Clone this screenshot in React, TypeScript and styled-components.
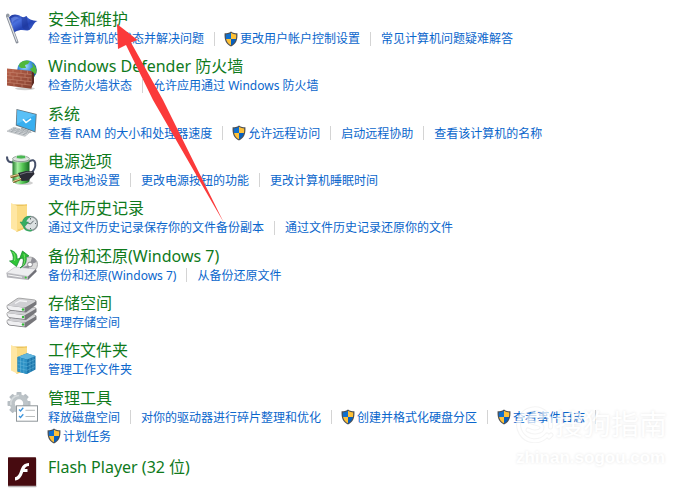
import React from "react";
import styled, { createGlobalStyle } from "styled-components";

const GlobalStyle = createGlobalStyle`
  * { box-sizing: border-box; }
  body {
    margin: 0;
    background: #fff;
    font-family: "Noto Sans", "Noto Sans CJK SC", sans-serif;
  }
`;

const Page = styled.main`
  position: relative;
  min-height: 100vh;
  overflow: hidden;
`;

const CategoryList = styled.ul`
  display: flex;
  flex-direction: column;
  justify-content: space-between;
  min-height: 100vh;
  margin: 0;
  padding: 9px 32px 3px 6px;
  list-style: none;
`;

const CategoryRow = styled.li<{ $bare?: boolean }>`
  display: flex;
  align-items: flex-start;
  gap: 10px;
  margin-top: ${(p) => (p.$bare ? 3 : 0)}px;
  > svg {
    flex: none;
    margin-top: ${(p) => (p.$bare ? 0 : 3)}px;
  }
`;

const CategoryBody = styled.div`
  flex: 1;
  min-width: 0;
`;

const CategoryTitle = styled.h2`
  margin: 0;
  font-size: 16px;
  line-height: 20px;
  font-weight: 400;
  a {
    color: #0f7a1c;
    text-decoration: none;
  }
`;

const TaskList = styled.ul`
  display: flex;
  flex-wrap: wrap;
  margin: 0;
  padding: 0;
  list-style: none;
`;

const TaskItem = styled.li`
  display: flex;
  align-items: center;
  height: 19px;
  &:not(:last-child)::after {
    content: "";
    width: 1px;
    height: 14px;
    margin: 0 10px;
    background: #d4d4d4;
  }
`;

const TaskLink = styled.a<{ $admin?: boolean }>`
  display: flex;
  align-items: center;
  gap: 2px;
  margin-left: ${(p) => (p.$admin ? -1 : 0)}px;
  color: #0a66cc;
  font-size: 12px;
  line-height: 19px;
  text-decoration: none;
  white-space: pre;
`;

const Arrow = styled.svg`
  position: absolute;
  left: 112px;
  top: 20px;
  pointer-events: none;
`;

const Watermark = styled.div`
  position: absolute;
  right: 24px;
  bottom: 22px;
  display: flex;
  flex-direction: column;
  gap: 2px;
  color: #fff;
  text-shadow: 0 0 3px rgba(0, 0, 0, 0.14);
  opacity: 0.7;
  pointer-events: none;
`;

const WatermarkBrand = styled.div`
  display: flex;
  align-items: center;
  gap: 1px;
  font-size: 28px;
  line-height: 40px;
`;

const WatermarkSite = styled.div`
  font-family: "Liberation Sans", sans-serif;
  font-size: 17px;
  font-weight: 700;
  line-height: 24px;
`;

const Shield = () => (
  <svg width="14" height="16" viewBox="0 0 14 16" aria-hidden="true">
    <path d="M7 .4 C5 1.9 2.7 2.3 .6 2.3 C.2 8.8 1.8 13.1 7 15.6 C12.2 13.1 13.8 8.8 13.4 2.3 C11.3 2.3 9 1.9 7 .4Z" fill="#4d5054" />
    <path d="M7 1.8 C5.3 2.9 3.5 3.3 1.8 3.4 C1.7 5.2 1.8 6.8 2.1 8 H7Z" fill="#0f6fce" />
    <path d="M7 1.8 C8.7 2.9 10.5 3.3 12.2 3.4 C12.3 5.2 12.2 6.8 11.9 8 H7Z" fill="#ffc136" />
    <path d="M2.1 8 H7 V14.3 C4.3 13 2.7 10.9 2.1 8Z" fill="#ffc136" />
    <path d="M11.9 8 H7 V14.3 C9.7 13 11.3 10.9 11.9 8Z" fill="#075fbd" />
  </svg>
);

const Icon = ({ children }: { children: React.ReactNode }) => (
  <svg width="32" height="32" viewBox="0 0 32 32" aria-hidden="true">{children}</svg>
);

const FlagIcon = () => (
  <Icon>
    <defs>
      <linearGradient id="flag" x1="0" y1="0" x2="1" y2="1">
        <stop offset="0" stopColor="#172d91" />
        <stop offset=".35" stopColor="#4a70de" />
        <stop offset=".6" stopColor="#2443b3" />
        <stop offset="1" stopColor="#4b71dc" />
      </linearGradient>
    </defs>
    <path d="M1.4 4 L11 30" stroke="#888e98" strokeWidth="2.8" strokeLinecap="round" />
    <path d="M1.5 4 L11 29.6" stroke="#e1e4e8" strokeWidth="1.1" />
    <circle cx="1.8" cy="3.2" r="1.7" fill="#9299a2" />
    <path d="M3 5.2 C7 1.5 11 2.2 15 4.5 C17.5 6 19.5 4.5 20.5 4 C22 7 26 8.5 31.5 9 C27 11 27 15 24 17.5 C20 20.5 17 15.5 8.5 20.3Z" fill="url(#flag)" />
    <path d="M15 4.5 C16.5 8 15 12 17 16.4 C20 18 22 18.5 24 17.2 C21 13 22 8 20.5 4 C19 5 17 6 15 4.5Z" fill="#1c3396" opacity=".55" />
    <path d="M5 6.5 C8 4 11 4.3 13.4 6.3 C11 7 8 8 6.2 11Z" fill="#7b9bf0" opacity=".55" />
  </Icon>
);

const FirewallIcon = () => (
  <Icon>
    <defs>
      <radialGradient id="globe" cx=".4" cy=".3" r=".75">
        <stop offset="0" stopColor="#a6e2ff" />
        <stop offset=".5" stopColor="#3689d9" />
        <stop offset="1" stopColor="#123d8e" />
      </radialGradient>
      <linearGradient id="bricks" x2="1" y2="1">
        <stop offset="0" stopColor="#b9624b" />
        <stop offset="1" stopColor="#84402f" />
      </linearGradient>
    </defs>
    <ellipse cx="19" cy="29.6" rx="10" ry="1.6" fill="#777" opacity=".35" />
    <circle cx="21" cy="11" r="9.8" fill="url(#globe)" />
    <path d="M14 4 C17 1 21 1 24 2 L22 5 L19 6 L20 9 L15 9 L12.5 7Z M26 4 C30 7 31.5 11 30 15 L27 14 L24 10 L27 8Z M24 15 L29 17 L25 20Z" fill="#50b83c" />
    <path d="M25.5 12 L28 14 V24 L25 29Z" fill="#5f2b22" />
    <path d="M1 9.5 L25.5 12 V29.8 L1 26.5Z" fill="url(#bricks)" />
    <path d="M1 13 L25.5 15.5 M1 16.5 L25.5 19 M1 20 L25.5 22.7 M1 23.3 L25.5 26.2 M7 10.2 V13.5 M15 11 V14.4 M21.5 11.7 V15 M4 13.4 V16.7 M11 14 V17.5 M19 15 V18.3 M7 17.2 V20.6 M15 18 V21.5 M22 18.8 V22.3 M4 20.5 V23.6 M11 21.2 V24.4 M19 22.2 V25.4 M8 24.2 V27.3 M16 25 V28.4" stroke="#c98a74" strokeWidth=".6" fill="none" />
  </Icon>
);

const SystemIcon = () => (
  <Icon>
    <path d="M10.5 2 L30.7 7 L29.5 25.5 L9.8 18.5Z" fill="#63747e" />
    <path d="M11.3 3 L29.8 7.7 L28.7 24.2 L10.7 17.7Z" fill="#38aff0" />
    <path d="M11.3 3 L29.8 7.7 L10.7 17Z" fill="#70cbfb" opacity=".6" />
    <path d="M17 12.2 L20 15.5 L25 11.8" stroke="#fff" strokeWidth="1.5" fill="none" />
    <path d="M15 20.5 L22 23 L26 25.5 L21 26 L15 23Z" fill="#a2abb0" />
    <path d="M1 24.2 L8 20.2 L24.5 24.8 L19 29.3Z" fill="#d9dcdf" stroke="#a7acb0" strokeWidth=".6" />
    <path d="M3 23.7 L19.7 28 M5 22.4 L21.3 26.8 M7 21.3 L23 25.6 M5 24.8 L10 21 M9 25.8 L14 22 M13 27 L18 23.1 M17 28 L22 24.2" stroke="#92999e" strokeWidth=".6" />
  </Icon>
);

const PowerIcon = () => (
  <Icon>
    <defs>
      <linearGradient id="battery">
        <stop offset="0" stopColor="#277d30" />
        <stop offset=".3" stopColor="#a5efa0" />
        <stop offset=".6" stopColor="#53c452" />
        <stop offset="1" stopColor="#166a23" />
      </linearGradient>
    </defs>
    <ellipse cx="18" cy="29" rx="9" ry="2" fill="#888" opacity=".4" />
    <path d="M1 2.5 C1 8 4 9 8 8 M22 8 C31 2 31 13 25.5 19" stroke="#46506a" strokeWidth="2" fill="none" />
    <path d="M6.5 6 V27 C8 31 21.5 31 23.5 27 V6Z" fill="url(#battery)" />
    <path d="M6.5 5.5 V7 C9 9 21 9 23.5 7 V5.5Z" fill="#c3cdc5" opacity=".85" />
    <ellipse cx="15" cy="4.8" rx="8.5" ry="2.8" fill="#dfe6e0" stroke="#84918a" strokeWidth=".8" />
    <ellipse cx="15" cy="3" rx="5" ry="2" fill="#4ab852" stroke="#d4ded5" strokeWidth=".8" />
    <path d="M12 19 L20 17 L27.5 17.5 L28.5 20 L22.5 26.5 L15.5 27Z" fill="#2b2b35" />
    <path d="M14 20.5 L21 18.3 L26.5 18.5" stroke="#74757f" fill="none" />
    <path d="M12.5 21 L4.5 23 M15 25 L7 28" stroke="#80612b" strokeWidth="2.4" />
    <path d="M12.5 20.5 L4.5 22.5 M15 24.5 L7 27.5" stroke="#eed49b" strokeWidth="1" />
  </Icon>
);

const Folder = () => (
  <>
    <path d="M5 3.4 H20 V27 L10.5 31Z" fill="#eac35e" />
    <path d="M11.5 7 L21 3 V26.5 L11.5 30.5Z" fill="#f3cd68" />
    <path d="M5 2 L11.5 5 V30.8 L5 27.4Z" fill="#ffe7a4" />
    <path d="M11 5 H21 V26 L11 28.5Z" fill="#fbdc85" />
  </>
);

const HistoryIcon = () => (
  <Icon>
    <Folder />
    <circle cx="24.5" cy="22.5" r="7" fill="#dce1e2" stroke="#8d9697" strokeWidth="1.5" />
    <path d="M24.5 17 V18.5 M24.5 27 V28 M19 22.5 H20.5 M29 22.5 H30 M24.5 23 L27.7 19.7 M24.5 23 L20.5 21.5" stroke="#5f686b" strokeWidth="1" />
    <path d="M24.5 15.5 C20 14.5 17 17.5 16.5 21 H14 L18 26.5 L22.5 21 H20 C20.5 18.5 22 17 24.5 15.5Z" fill="#37ad63" stroke="#209052" strokeWidth=".5" />
    <path d="M17.5 25 C19 29 22 30.5 26 29.2" stroke="#39a863" strokeWidth="1.5" fill="none" />
  </Icon>
);

const BackupIcon = () => (
  <Icon>
    <circle cx="24" cy="15.5" r="7.5" fill="#dadada" stroke="#aaaaad" />
    <path d="M24 15.5 L26 8.2 A7.5 7.5 0 0 1 30.8 13Z M24 15.5 L17 18.2 A7.5 7.5 0 0 0 22 22.6Z" fill="#909097" />
    <circle cx="24" cy="15.5" r="2.4" fill="#fff" stroke="#85858a" />
    <path d="M0.5 24 L9 18 L30 20 L22 27.5Z" fill="#eeeef0" stroke="#a9a9ae" strokeWidth=".5" />
    <path d="M.5 24 L22 27.5 V31 L1 28.5Z" fill="#b5b5ba" />
    <path d="M22 27.5 L30 20 L30.7 22.5 L22 31Z" fill="#707077" />
    <path d="M2 26 L16 28.2" stroke="#f8f8f8" strokeWidth="1" />
    <circle cx="19.7" cy="28.5" r="1" fill="#37c832" />
    <path d="M4.5 1 C10 3 11.5 6 11 10 L14 9.5 L10.5 17.5 L3.5 12 L7 11.5 C8 7 6 4 4.5 1Z" fill="#2fc637" stroke="#13852b" strokeWidth=".7" />
    <path d="M14 19 C18 16 18 12 16.5 9 L13.5 10 L16.5 2 L23 7 L20 8 C21 13 19 17 14 19Z" fill="#2dbb35" stroke="#118128" strokeWidth=".7" />
    <path d="M6.5 3 C9 5 9.5 8 8.5 12 M18 5 C19.5 10 19 14 16.8 16.5" stroke="#8bea75" fill="none" strokeWidth=".8" />
  </Icon>
);

const Drive = ({ y }: { y: number }) => (
  <g transform={`translate(0 ${y})`}>
    <path d="M1 8 L11 1.2 Q12 .5 14 .7 L28.5 2.4 Q31 3 29.4 4.6 L20.5 12.2 Q19 13.2 17 12.8 L3 11.6 Q.3 11 1 8Z" fill="#d5d5d7" stroke="#777" strokeWidth=".6" />
    <path d="M1 8 L19 10 L30.5 3.5 V7 L20 15 L3.5 13 Q.8 12 1 8Z" fill="#77777b" />
    <path d="M1 8 L18.5 10.2 V14 L3.5 12.2 Q1 11 1 8Z" fill="#f0f0f2" />
    <path d="M4 8 L12 2 L27 3.5 L19 9.5Z" fill="#cfcfd3" />
    <path d="M9 6 L14 3.2 L21 4" stroke="#f4f4f6" fill="none" strokeWidth="1.4" />
    <circle cx="17" cy="12" r="1.2" fill="#31b934" />
  </g>
);

const StorageIcon = () => (
  <Icon>
    <Drive y={16.5} />
    <Drive y={9} />
    <Drive y={1.5} />
  </Icon>
);

const WorkFoldersIcon = () => (
  <Icon>
    <Folder />
    <path d="M11.5 14 L21 10.3 L29.5 13 V26.5 L21 31 L11.5 28.5Z" fill="#1b76ac" />
    <path d="M11.5 14 L21 10.3 L29.5 13 L21 16.5Z" fill="#5fb5de" />
    <path d="M11.5 14 L21 16.5 V31 L11.5 28.5Z" fill="#2c90c4" />
    <path d="M11.5 17.8 L21 20 L29.5 16.2 M11.5 21.4 L21 23.6 L29.5 19.8 M11.5 25 L21 27.3 L29.5 23.3 M14.5 15 V29 M17.8 15.9 V30 M24 15.5 V29 M27 14.2 V27.6" stroke="#6bb9dc" strokeWidth=".5" fill="none" />
  </Icon>
);

const TEETH = [0, 45, 90, 135, 180, 225, 270, 315];

const ToolsIcon = () => (
  <Icon>
    {TEETH.map((angle) => (
      <rect key={angle} x="10.5" y="1" width="5" height="5" rx=".8" fill="#b7bec3" transform={`rotate(${angle} 13 12.5)`} />
    ))}
    <circle cx="13" cy="12.5" r="6.7" fill="none" stroke="#bdc4c8" strokeWidth="5" />
    <path d="M5 14 A8 8 0 0 1 13 4.5" stroke="#d7dcde" strokeWidth="1.5" fill="none" />
    <rect x="10.5" y="14.8" width="21" height="15.4" fill="#fff" stroke="#8f969a" />
    <path d="M13 18.5 L14.5 20 L17.3 16.8 M13 25 L14.5 26.5 L17.3 23.3" stroke="#3b94dc" strokeWidth="1.3" fill="none" />
    <path d="M19.5 19.3 H29 M19.5 25.5 H29" stroke="#b1b5b7" strokeWidth=".9" />
  </Icon>
);

const FlashIcon = () => (
  <Icon>
    <rect x="2" y="1.2" width="28.5" height="29" rx=".8" fill="#827778" opacity=".55" />
    <rect x="2" y=".3" width="28" height="28.5" rx=".5" fill="#470b10" />
    <path d="M23 6 V9 C20.3 9.2 19.3 10.4 18.6 12 H21.5 V15 H17.2 C15.5 20 13.3 23.2 9 23.5 V20.2 C12 19.7 13 17.3 14.2 13.8 C15.8 9.2 17.8 6.2 23 6Z" fill="#fff" />
  </Icon>
);

type Task = { label: string; admin?: boolean };
type Category = { title: string; icon: React.ReactNode; tasks: Task[] };

const CATEGORIES: Category[] = [
  {
    title: "安全和维护",
    icon: <FlagIcon />,
    tasks: [
      { label: "检查计算机的状态并解决问题" },
      { label: "更改用户帐户控制设置", admin: true },
      { label: "常见计算机问题疑难解答" },
    ],
  },
  {
    title: "Windows Defender 防火墙",
    icon: <FirewallIcon />,
    tasks: [{ label: "检查防火墙状态" }, { label: "允许应用通过 Windows 防火墙" }],
  },
  {
    title: "系统",
    icon: <SystemIcon />,
    tasks: [
      { label: "查看 RAM 的大小和处理器速度" },
      { label: "允许远程访问", admin: true },
      { label: "启动远程协助" },
      { label: "查看该计算机的名称" },
    ],
  },
  {
    title: "电源选项",
    icon: <PowerIcon />,
    tasks: [{ label: "更改电池设置" }, { label: "更改电源按钮的功能" }, { label: "更改计算机睡眠时间" }],
  },
  {
    title: "文件历史记录",
    icon: <HistoryIcon />,
    tasks: [{ label: "通过文件历史记录保存你的文件备份副本" }, { label: "通过文件历史记录还原你的文件" }],
  },
  {
    title: "备份和还原(Windows 7)",
    icon: <BackupIcon />,
    tasks: [{ label: "备份和还原(Windows 7)" }, { label: "从备份还原文件" }],
  },
  { title: "存储空间", icon: <StorageIcon />, tasks: [{ label: "管理存储空间" }] },
  { title: "工作文件夹", icon: <WorkFoldersIcon />, tasks: [{ label: "管理工作文件夹" }] },
  {
    title: "管理工具",
    icon: <ToolsIcon />,
    tasks: [
      { label: "释放磁盘空间" },
      { label: "对你的驱动器进行碎片整理和优化" },
      { label: "创建并格式化硬盘分区", admin: true },
      { label: "查看事件日志", admin: true },
      { label: "计划任务", admin: true },
    ],
  },
  { title: "Flash Player (32 位)", icon: <FlashIcon />, tasks: [] },
];

export default function App() {
  return (
    <Page>
      <GlobalStyle />
      <CategoryList>
        {CATEGORIES.map(({ title, icon, tasks }) => (
          <CategoryRow key={title} $bare={tasks.length === 0}>
            {icon}
            <CategoryBody>
              <CategoryTitle>
                <a href="#category">{title}</a>
              </CategoryTitle>
              {tasks.length > 0 && (
                <TaskList>
                  {tasks.map(({ label, admin }) => (
                    <TaskItem key={label}>
                      <TaskLink href="#task" $admin={admin}>
                        {admin && <Shield />}
                        {label}
                      </TaskLink>
                    </TaskItem>
                  ))}
                </TaskList>
              )}
            </CategoryBody>
          </CategoryRow>
        ))}
      </CategoryList>
      <Arrow width="114" height="204" viewBox="0 0 114 204" aria-hidden="true">
        <path d="M5 4 L25.5 20 L19 22.5 L51 80 L112 203 L41 80 L14 25 L6 29Z" fill="#fb3a3a" />
      </Arrow>
      <Watermark>
        <WatermarkBrand>
          <svg width="38" height="38" viewBox="0 0 38 38" aria-hidden="true">
            <g fill="none" strokeLinecap="round">
              <path d="M31 30 A16 16 0 1 1 34.5 22 M33 32 L35 30 M26 12 C21 9 13 10 13 14.5 C13 19 26 17 26 22.5 C26 27.5 17 28 12 25" stroke="#f1f1f1" strokeWidth="5" />
              <path d="M31 30 A16 16 0 1 1 34.5 22 M33 32 L35 30 M26 12 C21 9 13 10 13 14.5 C13 19 26 17 26 22.5 C26 27.5 17 28 12 25" stroke="#fff" strokeWidth="3" />
            </g>
          </svg>
          搜狗指南
        </WatermarkBrand>
        <WatermarkSite>zhinan.sogou.com</WatermarkSite>
      </Watermark>
    </Page>
  );
}
